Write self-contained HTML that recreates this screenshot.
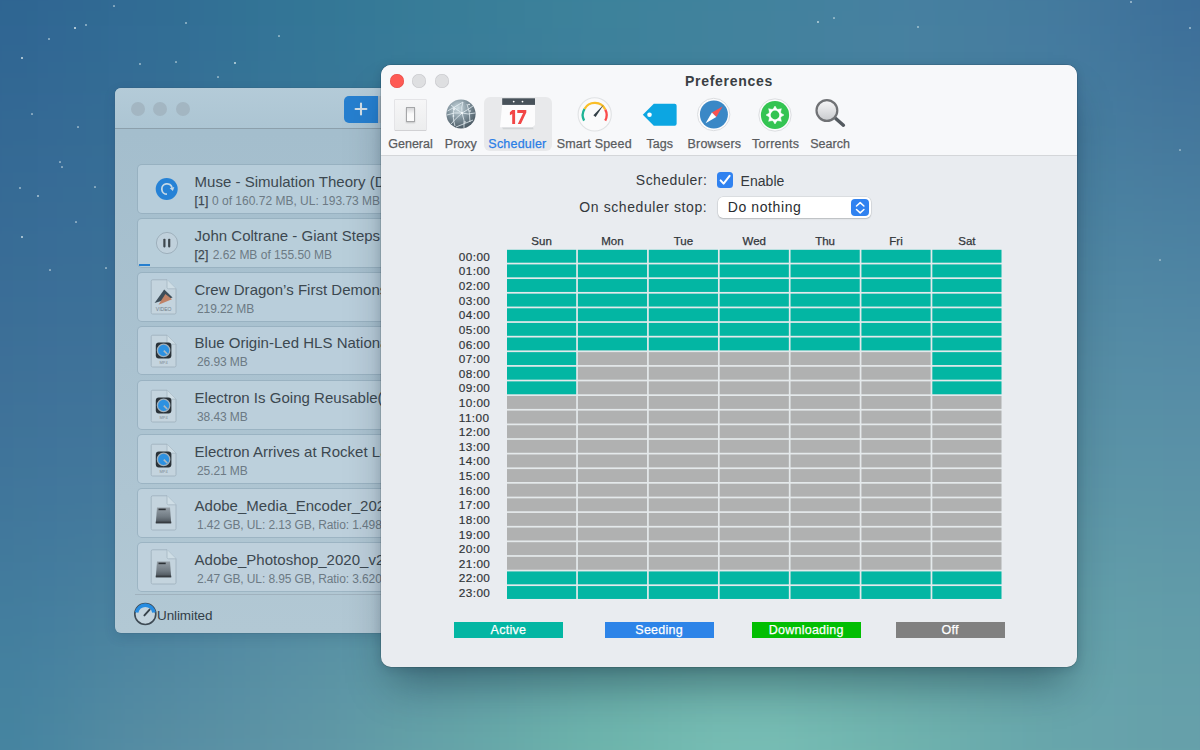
<!DOCTYPE html><html><head><meta charset="utf-8"><style>
html,body{margin:0;padding:0;}
body{width:1200px;height:750px;overflow:hidden;position:relative;font-family:"Liberation Sans",sans-serif;
background:rgb(70,128,158);
}
.t{position:absolute;white-space:nowrap;line-height:1;font-family:"Liberation Sans",sans-serif;}
.abs{position:absolute;}
</style></head><body>

<div class="abs" style="left:-250px;top:-250px;width:1700px;height:1250px;filter:blur(55px);overflow:hidden">
<div class="abs" style="left:0px;top:0px;width:325.0px;height:312.5px;background:rgb(46, 100, 146)"></div>
<div class="abs" style="left:325.0px;top:0px;width:150.0px;height:312.5px;background:rgb(48, 108, 148)"></div>
<div class="abs" style="left:475.0px;top:0px;width:150.0px;height:312.5px;background:rgb(50, 118, 150)"></div>
<div class="abs" style="left:625.0px;top:0px;width:150.0px;height:312.5px;background:rgb(55, 125, 152)"></div>
<div class="abs" style="left:775.0px;top:0px;width:150.0px;height:312.5px;background:rgb(60, 130, 155)"></div>
<div class="abs" style="left:925.0px;top:0px;width:150.0px;height:312.5px;background:rgb(65, 130, 157)"></div>
<div class="abs" style="left:1075.0px;top:0px;width:150.0px;height:312.5px;background:rgb(70, 128, 160)"></div>
<div class="abs" style="left:1225.0px;top:0px;width:150.0px;height:312.5px;background:rgb(68, 122, 158)"></div>
<div class="abs" style="left:1375.0px;top:0px;width:325.0px;height:312.5px;background:rgb(58, 108, 152)"></div>
<div class="abs" style="left:0px;top:312.5px;width:325.0px;height:125.0px;background:rgb(52, 104, 148)"></div>
<div class="abs" style="left:325.0px;top:312.5px;width:150.0px;height:125.0px;background:rgb(54, 110, 150)"></div>
<div class="abs" style="left:475.0px;top:312.5px;width:150.0px;height:125.0px;background:rgb(56, 118, 152)"></div>
<div class="abs" style="left:625.0px;top:312.5px;width:150.0px;height:125.0px;background:rgb(60, 124, 154)"></div>
<div class="abs" style="left:775.0px;top:312.5px;width:150.0px;height:125.0px;background:rgb(64, 128, 156)"></div>
<div class="abs" style="left:925.0px;top:312.5px;width:150.0px;height:125.0px;background:rgb(68, 130, 158)"></div>
<div class="abs" style="left:1075.0px;top:312.5px;width:150.0px;height:125.0px;background:rgb(72, 130, 160)"></div>
<div class="abs" style="left:1225.0px;top:312.5px;width:150.0px;height:125.0px;background:rgb(70, 126, 160)"></div>
<div class="abs" style="left:1375.0px;top:312.5px;width:325.0px;height:125.0px;background:rgb(68, 118, 155)"></div>
<div class="abs" style="left:0px;top:437.5px;width:325.0px;height:125.0px;background:rgb(56, 108, 150)"></div>
<div class="abs" style="left:325.0px;top:437.5px;width:150.0px;height:125.0px;background:rgb(58, 112, 152)"></div>
<div class="abs" style="left:475.0px;top:437.5px;width:150.0px;height:125.0px;background:rgb(60, 118, 154)"></div>
<div class="abs" style="left:625.0px;top:437.5px;width:150.0px;height:125.0px;background:rgb(64, 124, 156)"></div>
<div class="abs" style="left:775.0px;top:437.5px;width:150.0px;height:125.0px;background:rgb(68, 128, 158)"></div>
<div class="abs" style="left:925.0px;top:437.5px;width:150.0px;height:125.0px;background:rgb(72, 132, 160)"></div>
<div class="abs" style="left:1075.0px;top:437.5px;width:150.0px;height:125.0px;background:rgb(76, 134, 162)"></div>
<div class="abs" style="left:1225.0px;top:437.5px;width:150.0px;height:125.0px;background:rgb(78, 134, 162)"></div>
<div class="abs" style="left:1375.0px;top:437.5px;width:325.0px;height:125.0px;background:rgb(76, 130, 162)"></div>
<div class="abs" style="left:0px;top:562.5px;width:325.0px;height:125.0px;background:rgb(62, 112, 152)"></div>
<div class="abs" style="left:325.0px;top:562.5px;width:150.0px;height:125.0px;background:rgb(64, 116, 154)"></div>
<div class="abs" style="left:475.0px;top:562.5px;width:150.0px;height:125.0px;background:rgb(66, 120, 156)"></div>
<div class="abs" style="left:625.0px;top:562.5px;width:150.0px;height:125.0px;background:rgb(70, 126, 158)"></div>
<div class="abs" style="left:775.0px;top:562.5px;width:150.0px;height:125.0px;background:rgb(76, 132, 160)"></div>
<div class="abs" style="left:925.0px;top:562.5px;width:150.0px;height:125.0px;background:rgb(80, 138, 162)"></div>
<div class="abs" style="left:1075.0px;top:562.5px;width:150.0px;height:125.0px;background:rgb(84, 140, 164)"></div>
<div class="abs" style="left:1225.0px;top:562.5px;width:150.0px;height:125.0px;background:rgb(86, 142, 165)"></div>
<div class="abs" style="left:1375.0px;top:562.5px;width:325.0px;height:125.0px;background:rgb(86, 140, 166)"></div>
<div class="abs" style="left:0px;top:687.5px;width:325.0px;height:125.0px;background:rgb(64, 118, 155)"></div>
<div class="abs" style="left:325.0px;top:687.5px;width:150.0px;height:125.0px;background:rgb(68, 122, 157)"></div>
<div class="abs" style="left:475.0px;top:687.5px;width:150.0px;height:125.0px;background:rgb(72, 128, 158)"></div>
<div class="abs" style="left:625.0px;top:687.5px;width:150.0px;height:125.0px;background:rgb(78, 136, 160)"></div>
<div class="abs" style="left:775.0px;top:687.5px;width:150.0px;height:125.0px;background:rgb(84, 146, 162)"></div>
<div class="abs" style="left:925.0px;top:687.5px;width:150.0px;height:125.0px;background:rgb(90, 152, 164)"></div>
<div class="abs" style="left:1075.0px;top:687.5px;width:150.0px;height:125.0px;background:rgb(92, 152, 165)"></div>
<div class="abs" style="left:1225.0px;top:687.5px;width:150.0px;height:125.0px;background:rgb(92, 150, 167)"></div>
<div class="abs" style="left:1375.0px;top:687.5px;width:325.0px;height:125.0px;background:rgb(92, 148, 167)"></div>
<div class="abs" style="left:0px;top:812.5px;width:325.0px;height:125.0px;background:rgb(66, 125, 158)"></div>
<div class="abs" style="left:325.0px;top:812.5px;width:150.0px;height:125.0px;background:rgb(76, 132, 160)"></div>
<div class="abs" style="left:475.0px;top:812.5px;width:150.0px;height:125.0px;background:rgb(86, 142, 163)"></div>
<div class="abs" style="left:625.0px;top:812.5px;width:150.0px;height:125.0px;background:rgb(92, 152, 165)"></div>
<div class="abs" style="left:775.0px;top:812.5px;width:150.0px;height:125.0px;background:rgb(100, 166, 168)"></div>
<div class="abs" style="left:925.0px;top:812.5px;width:150.0px;height:125.0px;background:rgb(106, 175, 170)"></div>
<div class="abs" style="left:1075.0px;top:812.5px;width:150.0px;height:125.0px;background:rgb(104, 170, 170)"></div>
<div class="abs" style="left:1225.0px;top:812.5px;width:150.0px;height:125.0px;background:rgb(100, 162, 170)"></div>
<div class="abs" style="left:1375.0px;top:812.5px;width:325.0px;height:125.0px;background:rgb(98, 156, 169)"></div>
<div class="abs" style="left:0px;top:937.5px;width:325.0px;height:312.5px;background:rgb(68, 132, 160)"></div>
<div class="abs" style="left:325.0px;top:937.5px;width:150.0px;height:312.5px;background:rgb(88, 142, 163)"></div>
<div class="abs" style="left:475.0px;top:937.5px;width:150.0px;height:312.5px;background:rgb(95, 150, 166)"></div>
<div class="abs" style="left:625.0px;top:937.5px;width:150.0px;height:312.5px;background:rgb(102, 165, 168)"></div>
<div class="abs" style="left:775.0px;top:937.5px;width:150.0px;height:312.5px;background:rgb(110, 182, 172)"></div>
<div class="abs" style="left:925.0px;top:937.5px;width:150.0px;height:312.5px;background:rgb(122, 192, 182)"></div>
<div class="abs" style="left:1075.0px;top:937.5px;width:150.0px;height:312.5px;background:rgb(112, 180, 174)"></div>
<div class="abs" style="left:1225.0px;top:937.5px;width:150.0px;height:312.5px;background:rgb(104, 166, 171)"></div>
<div class="abs" style="left:1375.0px;top:937.5px;width:325.0px;height:312.5px;background:rgb(103, 160, 170)"></div>
</div>
<div class="abs" style="left:73.9px;top:26.9px;width:2.2px;height:2.2px;border-radius:50%;background:rgba(235,245,245,0.9)"></div>
<div class="abs" style="left:21.0px;top:57.0px;width:2px;height:2px;border-radius:50%;background:rgba(235,245,245,0.85)"></div>
<div class="abs" style="left:234.0px;top:62.0px;width:2px;height:2px;border-radius:50%;background:rgba(235,245,245,0.8)"></div>
<div class="abs" style="left:21.0px;top:236.0px;width:2px;height:2px;border-radius:50%;background:rgba(235,245,245,0.8)"></div>
<div class="abs" style="left:37.25px;top:195.25px;width:1.5px;height:1.5px;border-radius:50%;background:rgba(235,245,245,0.6)"></div>
<div class="abs" style="left:19.35px;top:187.35px;width:1.3px;height:1.3px;border-radius:50%;background:rgba(235,245,245,0.5)"></div>
<div class="abs" style="left:48.35px;top:38.35px;width:1.3px;height:1.3px;border-radius:50%;background:rgba(235,245,245,0.5)"></div>
<div class="abs" style="left:85.35px;top:24.35px;width:1.3px;height:1.3px;border-radius:50%;background:rgba(235,245,245,0.5)"></div>
<div class="abs" style="left:139.35px;top:63.35px;width:1.3px;height:1.3px;border-radius:50%;background:rgba(235,245,245,0.5)"></div>
<div class="abs" style="left:175.4px;top:61.4px;width:1.2px;height:1.2px;border-radius:50%;background:rgba(235,245,245,0.45)"></div>
<div class="abs" style="left:185.35px;top:22.35px;width:1.3px;height:1.3px;border-radius:50%;background:rgba(235,245,245,0.5)"></div>
<div class="abs" style="left:113.4px;top:5.4px;width:1.2px;height:1.2px;border-radius:50%;background:rgba(235,245,245,0.45)"></div>
<div class="abs" style="left:31.4px;top:113.4px;width:1.2px;height:1.2px;border-radius:50%;background:rgba(235,245,245,0.45)"></div>
<div class="abs" style="left:77.4px;top:126.4px;width:1.2px;height:1.2px;border-radius:50%;background:rgba(235,245,245,0.45)"></div>
<div class="abs" style="left:59.4px;top:161.4px;width:1.2px;height:1.2px;border-radius:50%;background:rgba(235,245,245,0.45)"></div>
<div class="abs" style="left:61.4px;top:166.4px;width:1.2px;height:1.2px;border-radius:50%;background:rgba(235,245,245,0.45)"></div>
<div class="abs" style="left:94.4px;top:186.4px;width:1.2px;height:1.2px;border-radius:50%;background:rgba(235,245,245,0.45)"></div>
<div class="abs" style="left:75.4px;top:221.4px;width:1.2px;height:1.2px;border-radius:50%;background:rgba(235,245,245,0.45)"></div>
<div class="abs" style="left:49.4px;top:269.4px;width:1.2px;height:1.2px;border-radius:50%;background:rgba(235,245,245,0.45)"></div>
<div class="abs" style="left:105.4px;top:267.4px;width:1.2px;height:1.2px;border-radius:50%;background:rgba(235,245,245,0.45)"></div>
<div class="abs" style="left:115.25px;top:177.25px;width:1.5px;height:1.5px;border-radius:50%;background:rgba(235,245,245,0.6)"></div>
<div class="abs" style="left:217.4px;top:76.4px;width:1.2px;height:1.2px;border-radius:50%;background:rgba(235,245,245,0.45)"></div>
<div class="abs" style="left:278.4px;top:35.4px;width:1.2px;height:1.2px;border-radius:50%;background:rgba(235,245,245,0.45)"></div>
<div class="abs" style="left:817.1px;top:21.1px;width:1.8px;height:1.8px;border-radius:50%;background:rgba(235,245,245,0.7)"></div>
<div class="abs" style="left:833.4px;top:17.4px;width:1.2px;height:1.2px;border-radius:50%;background:rgba(235,245,245,0.45)"></div>
<div class="abs" style="left:917.35px;top:26.35px;width:1.3px;height:1.3px;border-radius:50%;background:rgba(235,245,245,0.5)"></div>
<div class="abs" style="left:1130.25px;top:1.25px;width:1.5px;height:1.5px;border-radius:50%;background:rgba(235,245,245,0.55)"></div>
<div class="abs" style="left:1189.25px;top:27.25px;width:1.5px;height:1.5px;border-radius:50%;background:rgba(235,245,245,0.55)"></div>
<div class="abs" style="left:1179.4px;top:149.4px;width:1.2px;height:1.2px;border-radius:50%;background:rgba(235,245,245,0.4)"></div>
<div class="abs" style="left:1159.4px;top:259.4px;width:1.2px;height:1.2px;border-radius:50%;background:rgba(235,245,245,0.4)"></div>
<div class="abs" style="left:115px;top:88px;width:275px;height:545px;border-radius:6px;background:linear-gradient(rgb(164,190,205) 8%,rgb(170,194,208) 50%,rgb(178,200,212));box-shadow:0 0 0 0.5px rgba(60,90,110,0.35),0 4px 12px rgba(20,50,80,0.15);overflow:hidden">
<div class="abs" style="left:0;top:0;width:275px;height:40.3px;background:linear-gradient(rgb(180,203,216),rgb(172,197,211));border-bottom:1.9px solid rgb(140,160,172)"></div>
<div class="abs" style="left:15.50px;top:14.20px;width:14px;height:14px;border-radius:7px;background:rgb(163,182,194)"></div>
<div class="abs" style="left:38.20px;top:14.20px;width:14px;height:14px;border-radius:7px;background:rgb(163,182,194)"></div>
<div class="abs" style="left:60.80px;top:14.20px;width:14px;height:14px;border-radius:7px;background:rgb(163,182,194)"></div>
<div class="abs" style="left:229px;top:8px;width:40px;height:27px;border-radius:5px 0 0 5px;background:rgb(38,127,207)"></div>
<svg class="abs" style="left:238.70px;top:14.30px" width="14" height="14" viewBox="0 0 14 14"><path d="M1.6 7 H12.4 M7 1.6 V12.4" stroke="rgb(210,222,230)" stroke-width="2.1" stroke-linecap="round"/></svg>
<div class="abs" style="left:263px;top:8px;width:4px;height:27px;background:rgb(168,184,195)"></div>
</div>
<div class="abs" style="left:137.5px;top:165.30px;width:262px;height:47.5px;border-radius:4px;background:rgb(183,205,218);box-shadow:0 0 0 1px rgba(140,165,182,0.55)"></div>
<svg class="abs" style="left:155px;top:177.10px" width="24" height="24" viewBox="0 0 24 24"><circle cx="11.7" cy="12" r="11" fill="rgb(38,130,214)"/><path d="M12 17.2 A5.2 5.2 0 1 1 17.02 10.65" fill="none" stroke="rgb(196,216,230)" stroke-width="1.8"/><path d="M19.3 10.0 L14.7 11.3 L17.9 14.0 Z" fill="rgb(196,216,230)"/></svg>
<div class="t" style="left:194.50px;top:173.70px;font-size:15px;color:rgb(60,72,80);font-weight:400;letter-spacing:0.02px;">Muse - Simulation Theory (Deluxe)</div>
<div class="t" style="left:194.50px;top:194.64px;font-size:12px;color:rgb(62,72,80);font-weight:400;letter-spacing:0.2px;-webkit-text-stroke:0.25px rgb(62,72,80);">[1]</div>
<div class="t" style="left:212.00px;top:194.64px;font-size:12px;color:rgb(108,122,132);font-weight:400;letter-spacing:0px;">0 of 160.72 MB, UL: 193.73 MB</div>
<div class="abs" style="left:137.5px;top:219.20px;width:262px;height:47.5px;border-radius:4px;background:rgb(184,206,218);box-shadow:0 0 0 1px rgba(140,165,182,0.55)"></div>
<svg class="abs" style="left:155px;top:231.00px" width="24" height="24" viewBox="0 0 24 24"><circle cx="12" cy="12" r="10.6" fill="rgb(192,209,220)" stroke="rgb(158,176,188)" stroke-width="1"/><rect x="8.3" y="7.8" width="2.2" height="8.6" rx="0.8" fill="rgb(62,72,78)"/><rect x="13.1" y="7.8" width="2.2" height="8.6" rx="0.8" fill="rgb(62,72,78)"/></svg>
<div class="t" style="left:194.50px;top:227.60px;font-size:15px;color:rgb(60,72,80);font-weight:400;letter-spacing:0.02px;">John Coltrane - Giant Steps (60th)</div>
<div class="t" style="left:194.50px;top:248.54px;font-size:12px;color:rgb(62,72,80);font-weight:400;letter-spacing:0.2px;-webkit-text-stroke:0.25px rgb(62,72,80);">[2]</div>
<div class="t" style="left:212.70px;top:248.54px;font-size:12px;color:rgb(108,122,132);font-weight:400;letter-spacing:0px;">2.62 MB of 155.50 MB</div>
<div class="abs" style="left:137.5px;top:273.20px;width:262px;height:47.5px;border-radius:4px;background:rgb(185,206,219);box-shadow:0 0 0 1px rgba(140,165,182,0.55)"></div>
<svg class="abs" style="left:150px;top:278.70px" width="28" height="36" viewBox="0 0 28 36"><path d="M1.2 2.3 Q1.2 0.8 2.7 0.8 L17 0.8 L26 9.8 L26 33.5 Q26 35 24.5 35 L2.7 35 Q1.2 35 1.2 33.5 Z" fill="rgb(196,212,222)" stroke="rgb(160,178,190)" stroke-width="0.9"/><path d="M17 0.8 L17 8.3 Q17 9.8 18.5 9.8 L26 9.8" fill="rgb(206,221,229)" stroke="rgb(165,182,194)" stroke-width="0.8"/><path d="M4.6 23.9 L14.2 10.4 L22.6 18.5 Z" fill="rgb(62,78,90)"/><path d="M8.5 25.7 L15.4 14.9 L22 20.3 Z" fill="rgb(192,130,102)"/><text x="13.6" y="32.2" font-size="5" text-anchor="middle" fill="rgb(115,128,138)" font-family="Liberation Sans">VIDEO</text></svg>
<div class="t" style="left:194.50px;top:281.60px;font-size:15px;color:rgb(60,72,80);font-weight:400;letter-spacing:0.02px;">Crew Dragon’s First Demonstration</div>
<div class="t" style="left:197.00px;top:302.54px;font-size:12px;color:rgb(108,122,132);font-weight:400;letter-spacing:-0.1px;">219.22 MB</div>
<div class="abs" style="left:137.5px;top:326.90px;width:262px;height:47.5px;border-radius:4px;background:rgb(186,206,219);box-shadow:0 0 0 1px rgba(140,165,182,0.55)"></div>
<svg class="abs" style="left:150px;top:332.40px" width="28" height="36" viewBox="0 0 28 36"><path d="M1.2 4.7 Q1.2 3.2 2.7 3.2 L17 3.2 L26 12.2 L26 33.5 Q26 35 24.5 35 L2.7 35 Q1.2 35 1.2 33.5 Z" fill="rgb(196,212,222)" stroke="rgb(160,178,190)" stroke-width="0.9"/><path d="M17 3.2 L17 10.7 Q17 12.2 18.5 12.2 L26 12.2" fill="rgb(206,221,229)" stroke="rgb(165,182,194)" stroke-width="0.8"/><rect x="5.8" y="10.4" width="15.6" height="16.2" rx="3" fill="rgb(42,50,56)"/><circle cx="13.6" cy="18.4" r="6.2" fill="rgb(45,145,225)" stroke="rgb(160,176,188)" stroke-width="1.3"/><path d="M13.8 18.6 L17.2 22" stroke="rgb(175,185,192)" stroke-width="1.7"/><text x="13.6" y="32.3" font-size="4" text-anchor="middle" fill="rgb(125,138,148)" font-family="Liberation Sans">MP4</text></svg>
<div class="t" style="left:194.50px;top:335.30px;font-size:15px;color:rgb(60,72,80);font-weight:400;letter-spacing:0.02px;">Blue Origin-Led HLS National Team</div>
<div class="t" style="left:197.00px;top:356.24px;font-size:12px;color:rgb(108,122,132);font-weight:400;letter-spacing:-0.1px;">26.93 MB</div>
<div class="abs" style="left:137.5px;top:381.20px;width:262px;height:47.5px;border-radius:4px;background:rgb(187,207,219);box-shadow:0 0 0 1px rgba(140,165,182,0.55)"></div>
<svg class="abs" style="left:150px;top:386.70px" width="28" height="36" viewBox="0 0 28 36"><path d="M1.2 4.7 Q1.2 3.2 2.7 3.2 L17 3.2 L26 12.2 L26 33.5 Q26 35 24.5 35 L2.7 35 Q1.2 35 1.2 33.5 Z" fill="rgb(196,212,222)" stroke="rgb(160,178,190)" stroke-width="0.9"/><path d="M17 3.2 L17 10.7 Q17 12.2 18.5 12.2 L26 12.2" fill="rgb(206,221,229)" stroke="rgb(165,182,194)" stroke-width="0.8"/><rect x="5.8" y="10.4" width="15.6" height="16.2" rx="3" fill="rgb(42,50,56)"/><circle cx="13.6" cy="18.4" r="6.2" fill="rgb(45,145,225)" stroke="rgb(160,176,188)" stroke-width="1.3"/><path d="M13.8 18.6 L17.2 22" stroke="rgb(175,185,192)" stroke-width="1.7"/><text x="13.6" y="32.3" font-size="4" text-anchor="middle" fill="rgb(125,138,148)" font-family="Liberation Sans">MP4</text></svg>
<div class="t" style="left:194.50px;top:389.60px;font-size:15px;color:rgb(60,72,80);font-weight:400;letter-spacing:0.02px;">Electron Is Going Reusable(ish)</div>
<div class="t" style="left:197.00px;top:410.54px;font-size:12px;color:rgb(108,122,132);font-weight:400;letter-spacing:-0.1px;">38.43 MB</div>
<div class="abs" style="left:137.5px;top:435.30px;width:262px;height:47.5px;border-radius:4px;background:rgb(188,208,220);box-shadow:0 0 0 1px rgba(140,165,182,0.55)"></div>
<svg class="abs" style="left:150px;top:440.80px" width="28" height="36" viewBox="0 0 28 36"><path d="M1.2 4.7 Q1.2 3.2 2.7 3.2 L17 3.2 L26 12.2 L26 33.5 Q26 35 24.5 35 L2.7 35 Q1.2 35 1.2 33.5 Z" fill="rgb(196,212,222)" stroke="rgb(160,178,190)" stroke-width="0.9"/><path d="M17 3.2 L17 10.7 Q17 12.2 18.5 12.2 L26 12.2" fill="rgb(206,221,229)" stroke="rgb(165,182,194)" stroke-width="0.8"/><rect x="5.8" y="10.4" width="15.6" height="16.2" rx="3" fill="rgb(42,50,56)"/><circle cx="13.6" cy="18.4" r="6.2" fill="rgb(45,145,225)" stroke="rgb(160,176,188)" stroke-width="1.3"/><path d="M13.8 18.6 L17.2 22" stroke="rgb(175,185,192)" stroke-width="1.7"/><text x="13.6" y="32.3" font-size="4" text-anchor="middle" fill="rgb(125,138,148)" font-family="Liberation Sans">MP4</text></svg>
<div class="t" style="left:194.50px;top:443.70px;font-size:15px;color:rgb(60,72,80);font-weight:400;letter-spacing:0.02px;">Electron Arrives at Rocket Lab</div>
<div class="t" style="left:197.00px;top:464.64px;font-size:12px;color:rgb(108,122,132);font-weight:400;letter-spacing:-0.1px;">25.21 MB</div>
<div class="abs" style="left:137.5px;top:489.30px;width:262px;height:47.5px;border-radius:4px;background:rgb(189,208,220);box-shadow:0 0 0 1px rgba(140,165,182,0.55)"></div>
<svg class="abs" style="left:150px;top:494.80px" width="28" height="36" viewBox="0 0 28 36"><path d="M1.2 2.3 Q1.2 0.8 2.7 0.8 L17 0.8 L26 9.8 L26 33.5 Q26 35 24.5 35 L2.7 35 Q1.2 35 1.2 33.5 Z" fill="rgb(196,212,222)" stroke="rgb(160,178,190)" stroke-width="0.9"/><path d="M17 0.8 L17 8.3 Q17 9.8 18.5 9.8 L26 9.8" fill="rgb(206,221,229)" stroke="rgb(165,182,194)" stroke-width="0.8"/><defs><linearGradient id="hd" x1="0" y1="0" x2="0" y2="1"><stop offset="0" stop-color="rgb(150,160,168)"/><stop offset="0.6" stop-color="rgb(112,122,130)"/><stop offset="1" stop-color="rgb(70,78,85)"/></linearGradient></defs><path d="M7 12.4 L20 12.4 L21.2 28.3 L5.8 28.3 Z" fill="url(#hd)"/><rect x="8.5" y="13.6" width="7.2" height="1.6" fill="rgb(45,50,55)"/><rect x="5.8" y="26.6" width="15.4" height="1.7" fill="rgb(55,60,65)"/></svg>
<div class="t" style="left:194.50px;top:497.70px;font-size:15px;color:rgb(60,72,80);font-weight:400;letter-spacing:0.02px;">Adobe_Media_Encoder_2020_v14</div>
<div class="t" style="left:197.00px;top:518.64px;font-size:12px;color:rgb(108,122,132);font-weight:400;letter-spacing:-0.1px;">1.42 GB, UL: 2.13 GB, Ratio: 1.498</div>
<div class="abs" style="left:137.5px;top:543.20px;width:262px;height:47.5px;border-radius:4px;background:rgb(190,208,220);box-shadow:0 0 0 1px rgba(140,165,182,0.55)"></div>
<svg class="abs" style="left:150px;top:548.70px" width="28" height="36" viewBox="0 0 28 36"><path d="M1.2 2.3 Q1.2 0.8 2.7 0.8 L17 0.8 L26 9.8 L26 33.5 Q26 35 24.5 35 L2.7 35 Q1.2 35 1.2 33.5 Z" fill="rgb(196,212,222)" stroke="rgb(160,178,190)" stroke-width="0.9"/><path d="M17 0.8 L17 8.3 Q17 9.8 18.5 9.8 L26 9.8" fill="rgb(206,221,229)" stroke="rgb(165,182,194)" stroke-width="0.8"/><defs><linearGradient id="hd" x1="0" y1="0" x2="0" y2="1"><stop offset="0" stop-color="rgb(150,160,168)"/><stop offset="0.6" stop-color="rgb(112,122,130)"/><stop offset="1" stop-color="rgb(70,78,85)"/></linearGradient></defs><path d="M7 12.4 L20 12.4 L21.2 28.3 L5.8 28.3 Z" fill="url(#hd)"/><rect x="8.5" y="13.6" width="7.2" height="1.6" fill="rgb(45,50,55)"/><rect x="5.8" y="26.6" width="15.4" height="1.7" fill="rgb(55,60,65)"/></svg>
<div class="t" style="left:194.50px;top:551.60px;font-size:15px;color:rgb(60,72,80);font-weight:400;letter-spacing:0.02px;">Adobe_Photoshop_2020_v21</div>
<div class="t" style="left:197.00px;top:572.54px;font-size:12px;color:rgb(108,122,132);font-weight:400;letter-spacing:-0.1px;">2.47 GB, UL: 8.95 GB, Ratio: 3.620</div>
<div class="abs" style="left:138.7px;top:264px;width:11.5px;height:2px;background:rgb(38,127,207)"></div>
<div class="abs" style="left:135px;top:594px;width:260px;height:1px;background:rgb(160,178,190)"></div>
<svg class="abs" style="left:133px;top:602px" width="25" height="25" viewBox="0 0 25 25"><circle cx="12.3" cy="12" r="10.5" fill="rgb(196,212,222)" stroke="rgb(62,74,84)" stroke-width="1.6"/><path d="M3.6 10.6 A8.8 8.8 0 0 1 21 10.6" fill="none" stroke="rgb(38,140,225)" stroke-width="3.6"/><path d="M11.4 13.4 L16.6 7.6" stroke="rgb(55,66,75)" stroke-width="1.9" stroke-linecap="round"/></svg>
<div class="t" style="left:157.00px;top:608.87px;font-size:13.5px;color:rgb(50,62,72);font-weight:400;letter-spacing:-0.1px;">Unlimited</div>
<div class="abs" style="left:381px;top:65.2px;width:696.3px;height:601.6px;border-radius:10px;background:rgb(233,236,240);overflow:hidden;box-shadow:0 0 0 0.5px rgba(0,0,0,0.2),0 26px 40px -10px rgba(0,20,40,0.38),0 2px 10px rgba(0,20,40,0.14)">
<div class="abs" style="left:0;top:0;width:696.3px;height:89.8px;background:rgb(247,248,250);border-bottom:1px solid rgb(212,214,217)"></div>
</div>
<div class="abs" style="left:389.7px;top:73.8px;width:14px;height:14px;border-radius:7px;background:rgb(254,90,84);box-shadow:inset 0 0 0 0.5px rgba(210,60,55,0.6)"></div>
<div class="abs" style="left:412.2px;top:73.8px;width:14px;height:14px;border-radius:7px;background:rgb(222,223,225);box-shadow:inset 0 0 0 0.5px rgba(180,180,185,0.6)"></div>
<div class="abs" style="left:434.7px;top:73.8px;width:14px;height:14px;border-radius:7px;background:rgb(222,223,225);box-shadow:inset 0 0 0 0.5px rgba(180,180,185,0.6)"></div>
<div class="t" style="left:529.00px;width:400px;text-align:center;top:73.55px;font-size:14px;color:rgb(58,63,68);font-weight:700;letter-spacing:0.7px;">Preferences</div>
<div class="abs" style="left:483.5px;top:96.8px;width:68px;height:54px;border-radius:6px;background:rgb(232,233,235)"></div>
<div class="abs" style="left:395.4px;top:99.7px;width:31px;height:30.5px;background:linear-gradient(rgb(246,246,247),rgb(236,237,238));box-shadow:0 0 0 0.6px rgb(215,216,218), 0 1px 0 rgb(200,201,203)"></div>
<div class="abs" style="left:406.2px;top:106.6px;width:9px;height:15.4px;box-sizing:border-box;border:1.2px solid rgb(165,166,168);background:linear-gradient(rgb(215,215,217),rgb(250,250,250) 45%,rgb(252,252,252));box-shadow:0 1px 1.5px rgba(0,0,0,0.18)"></div>
<svg class="abs" style="left:445px;top:98.2px" width="32" height="32" viewBox="0 0 32 32">
<defs><radialGradient id="gl" cx="0.4" cy="0.3" r="0.8"><stop offset="0" stop-color="rgb(205,220,226)"/><stop offset="0.45" stop-color="rgb(130,148,158)"/><stop offset="1" stop-color="rgb(60,74,84)"/></radialGradient></defs>
<circle cx="16" cy="16" r="14.6" fill="url(#gl)"/>
<g fill="none" stroke="rgba(240,248,252,0.8)" stroke-width="0.9">
<path d="M2.5 13 Q10 9 18 4"/><path d="M6 7 Q12 12 17 15 Q24 11 28 8"/><path d="M2 17 Q9 14 17 15"/><path d="M17 15 Q23 17 30 15"/><path d="M6 26 Q11 20 17 15"/><path d="M17 15 Q20 22 19 30"/><path d="M18 4 Q16 9 17 15"/><path d="M11 29 Q21 25 28 22"/><path d="M9 11 Q7 18 10 28"/><path d="M22 6 Q25 14 25 24"/>
</g>
<g fill="rgb(245,250,252)"><circle cx="17" cy="15" r="1.1"/><circle cx="9" cy="11" r="0.9"/><circle cx="25" cy="13" r="0.8"/><circle cx="8.5" cy="18" r="0.8"/><circle cx="20" cy="24" r="0.8"/><circle cx="24" cy="6.5" r="0.8"/></g>
</svg>
<svg class="abs" style="left:499px;top:97px" width="39" height="34" viewBox="0 0 39 34">
<path d="M3 30.3 L34 30.3 L34.5 32.3 L4 32.3 Z" fill="rgb(200,202,205)" opacity="0.7"/>
<path d="M3.2 7.5 L36 7.5 L36 28 L33.3 30.3 L1 30.3 Z" fill="rgb(252,252,253)"/>
<rect x="3.2" y="1.3" width="32.8" height="6.6" fill="rgb(72,82,90)"/>
<circle cx="14.7" cy="4.6" r="0.9" fill="#fff"/><circle cx="23.5" cy="4.6" r="0.9" fill="#fff"/>
<path d="M13.3 13.1 L16.1 13.1 L16.1 27.1 L13.2 27.1 L13.2 16.9 L10.9 18.3 L10.9 15.3 Z" fill="rgb(242,70,70)"/><path d="M18.3 13.1 L27.3 13.1 L27.3 15.5 L21.9 27.1 L18.8 27.1 L24.1 15.9 L18.3 15.9 Z" fill="rgb(242,70,70)"/>
</svg>
<svg class="abs" style="left:576px;top:96px" width="38" height="38" viewBox="0 0 38 38">
<circle cx="18.7" cy="18.4" r="16.6" fill="rgb(250,250,251)" stroke="rgb(224,226,228)" stroke-width="1.1"/>
<g fill="none" stroke-width="2.3">
<path d="M8.1 24.6 A11.6 11.6 0 0 1 8.6 12.9" stroke="rgb(30,180,150)"/>
<path d="M8.6 12.9 A11.6 11.6 0 0 1 29.3 13.6" stroke="rgb(250,190,40)"/>
<path d="M29.3 13.6 A11.6 11.6 0 0 1 29.2 24.6" stroke="rgb(250,75,75)"/>
</g>
<path d="M17.4 19.2 L27.8 8.4 L19.6 21 Z" fill="rgb(50,62,70)"/>
</svg>
<svg class="abs" style="left:640px;top:100px" width="40" height="30" viewBox="0 0 40 30">
<path d="M2.8 14.7 L13.8 3.7 L34.6 3.7 Q36.6 3.7 36.6 5.7 L36.6 23.8 Q36.6 25.8 34.6 25.8 L13.8 25.8 Z" fill="rgb(12,166,226)"/>
<circle cx="9.5" cy="14.7" r="2.3" fill="#fff"/>
</svg>
<svg class="abs" style="left:696px;top:96px" width="36" height="36" viewBox="0 0 36 36">
<circle cx="17.7" cy="18.5" r="16.2" fill="rgb(252,252,253)" stroke="rgb(220,222,225)" stroke-width="1"/>
<circle cx="17.9" cy="18.5" r="14.0" fill="rgb(58,136,198)"/>
<path d="M26.6 10.4 L20.3 21.0 L15.9 16.6 Z" fill="rgb(250,82,80)"/>
<path d="M9.6 27.2 L15.9 16.6 L20.3 21.0 Z" fill="#fff"/>
</svg>
<svg class="abs" style="left:757.2px;top:96.6px" width="36" height="36" viewBox="0 0 36 36">
<circle cx="18" cy="18" r="16.2" fill="rgb(252,252,253)" stroke="rgb(220,222,225)" stroke-width="1"/>
<circle cx="18" cy="18" r="14.1" fill="rgb(52,196,82)"/>
<polygon points="18.00,9.00 19.35,11.23 20.37,12.27 21.83,12.26 24.36,11.64 23.74,14.17 23.73,15.63 24.77,16.65 27.00,18.00 24.77,19.35 23.73,20.37 23.74,21.83 24.36,24.36 21.83,23.74 20.37,23.73 19.35,24.77 18.00,27.00 16.65,24.77 15.63,23.73 14.17,23.74 11.64,24.36 12.26,21.83 12.27,20.37 11.23,19.35 9.00,18.00 11.23,16.65 12.27,15.63 12.26,14.17 11.64,11.64 14.17,12.26 15.63,12.27 16.65,11.23" fill="#fff" stroke="#fff" stroke-width="0.5" stroke-linejoin="miter"/>
<circle cx="18" cy="18" r="4.4" fill="rgb(52,196,82)"/>
</svg>
<svg class="abs" style="left:810px;top:94px" width="40" height="40" viewBox="0 0 40 40">
<defs><linearGradient id="lens" x1="0" y1="0" x2="0" y2="1"><stop offset="0" stop-color="rgb(248,248,249)"/><stop offset="1" stop-color="rgb(200,202,205)"/></linearGradient></defs>
<path d="M25.7 24.5 L33.4 31.2" stroke="rgb(84,90,96)" stroke-width="3.5" stroke-linecap="round"/>
<circle cx="16.9" cy="16.5" r="10.4" fill="url(#lens)" stroke="rgb(112,114,117)" stroke-width="2.2"/>
</svg>
<div class="t" style="left:210.50px;width:400px;text-align:center;top:138.22px;font-size:12.5px;color:rgb(90,92,95);font-weight:400;letter-spacing:0px;-webkit-text-stroke:0.25px rgb(90,92,95);">General</div>
<div class="t" style="left:260.80px;width:400px;text-align:center;top:138.22px;font-size:12.5px;color:rgb(90,92,95);font-weight:400;letter-spacing:0px;-webkit-text-stroke:0.25px rgb(90,92,95);">Proxy</div>
<div class="t" style="left:317.40px;width:400px;text-align:center;top:138.22px;font-size:12.5px;color:rgb(42,125,230);font-weight:400;letter-spacing:0.2px;-webkit-text-stroke:0.25px rgb(42,125,230);">Scheduler</div>
<div class="t" style="left:394.25px;width:400px;text-align:center;top:138.22px;font-size:12.5px;color:rgb(90,92,95);font-weight:400;letter-spacing:0.2px;-webkit-text-stroke:0.25px rgb(90,92,95);">Smart Speed</div>
<div class="t" style="left:459.70px;width:400px;text-align:center;top:138.22px;font-size:12.5px;color:rgb(90,92,95);font-weight:400;letter-spacing:0px;-webkit-text-stroke:0.25px rgb(90,92,95);">Tags</div>
<div class="t" style="left:514.40px;width:400px;text-align:center;top:138.22px;font-size:12.5px;color:rgb(90,92,95);font-weight:400;letter-spacing:0.2px;-webkit-text-stroke:0.25px rgb(90,92,95);">Browsers</div>
<div class="t" style="left:575.60px;width:400px;text-align:center;top:138.22px;font-size:12.5px;color:rgb(90,92,95);font-weight:400;letter-spacing:0.25px;-webkit-text-stroke:0.25px rgb(90,92,95);">Torrents</div>
<div class="t" style="left:630.10px;width:400px;text-align:center;top:138.22px;font-size:12.5px;color:rgb(90,92,95);font-weight:400;letter-spacing:0px;-webkit-text-stroke:0.25px rgb(90,92,95);">Search</div>
<div class="t" style="left:307.30px;width:400px;text-align:right;top:172.55px;font-size:14px;color:rgb(52,56,60);font-weight:400;letter-spacing:0.45px;">Scheduler:</div>
<div class="t" style="left:307.30px;width:400px;text-align:right;top:200.45px;font-size:14px;color:rgb(52,56,60);font-weight:400;letter-spacing:0.58px;">On scheduler stop:</div>
<div class="abs" style="left:717.2px;top:172px;width:15.6px;height:15.8px;border-radius:3.5px;background:rgb(48,130,240)"></div>
<svg class="abs" style="left:717.2px;top:172px" width="16" height="16" viewBox="0 0 16 16"><path d="M3.6 8.4 L6.6 11.6 L12.6 3.8" fill="none" stroke="#fff" stroke-width="2" stroke-linecap="round" stroke-linejoin="round"/></svg>
<div class="t" style="left:740.50px;top:174.15px;font-size:14px;color:rgb(52,56,60);font-weight:400;letter-spacing:0.05px;">Enable</div>
<div class="abs" style="left:718.1px;top:197.1px;width:152.7px;height:21.2px;border-radius:5px;background:#fff;box-shadow:0 0 0 0.5px rgba(0,0,0,0.12),0 1px 1.5px rgba(0,0,0,0.15)"></div>
<div class="t" style="left:727.70px;top:199.85px;font-size:14px;color:rgb(40,44,48);font-weight:400;letter-spacing:0.6px;">Do nothing</div>
<div class="abs" style="left:850.6px;top:199px;width:18px;height:17px;border-radius:4px;background:rgb(48,130,240)"></div>
<svg class="abs" style="left:850.6px;top:199px" width="18" height="17" viewBox="0 0 18 17"><path d="M5.5 7.0 L9.2 3.6 L12.9 7.0 M5.5 10.5 L9.2 13.9 L12.9 10.5" fill="none" stroke="#fff" stroke-width="1.5" stroke-linecap="round" stroke-linejoin="round"/></svg>
<div class="t" style="left:341.58px;width:400px;text-align:center;top:236.27px;font-size:11.5px;color:rgb(50,54,58);font-weight:400;letter-spacing:0px;-webkit-text-stroke:0.25px rgb(50,54,58);">Sun</div>
<div class="t" style="left:412.47px;width:400px;text-align:center;top:236.27px;font-size:11.5px;color:rgb(50,54,58);font-weight:400;letter-spacing:0px;-webkit-text-stroke:0.25px rgb(50,54,58);">Mon</div>
<div class="t" style="left:483.36px;width:400px;text-align:center;top:236.27px;font-size:11.5px;color:rgb(50,54,58);font-weight:400;letter-spacing:0px;-webkit-text-stroke:0.25px rgb(50,54,58);">Tue</div>
<div class="t" style="left:554.25px;width:400px;text-align:center;top:236.27px;font-size:11.5px;color:rgb(50,54,58);font-weight:400;letter-spacing:0px;-webkit-text-stroke:0.25px rgb(50,54,58);">Wed</div>
<div class="t" style="left:625.14px;width:400px;text-align:center;top:236.27px;font-size:11.5px;color:rgb(50,54,58);font-weight:400;letter-spacing:0px;-webkit-text-stroke:0.25px rgb(50,54,58);">Thu</div>
<div class="t" style="left:696.03px;width:400px;text-align:center;top:236.27px;font-size:11.5px;color:rgb(50,54,58);font-weight:400;letter-spacing:0px;-webkit-text-stroke:0.25px rgb(50,54,58);">Fri</div>
<div class="t" style="left:766.92px;width:400px;text-align:center;top:236.27px;font-size:11.5px;color:rgb(50,54,58);font-weight:400;letter-spacing:0px;-webkit-text-stroke:0.25px rgb(50,54,58);">Sat</div>
<div class="t" style="left:458.80px;top:251.81px;font-size:11.8px;color:rgb(48,52,56);font-weight:400;letter-spacing:0.4px;-webkit-text-stroke:0.18px rgb(48,52,56);">00:00</div>
<div class="t" style="left:458.80px;top:266.43px;font-size:11.8px;color:rgb(48,52,56);font-weight:400;letter-spacing:0.4px;-webkit-text-stroke:0.18px rgb(48,52,56);">01:00</div>
<div class="t" style="left:458.80px;top:281.05px;font-size:11.8px;color:rgb(48,52,56);font-weight:400;letter-spacing:0.4px;-webkit-text-stroke:0.18px rgb(48,52,56);">02:00</div>
<div class="t" style="left:458.80px;top:295.67px;font-size:11.8px;color:rgb(48,52,56);font-weight:400;letter-spacing:0.4px;-webkit-text-stroke:0.18px rgb(48,52,56);">03:00</div>
<div class="t" style="left:458.80px;top:310.29px;font-size:11.8px;color:rgb(48,52,56);font-weight:400;letter-spacing:0.4px;-webkit-text-stroke:0.18px rgb(48,52,56);">04:00</div>
<div class="t" style="left:458.80px;top:324.91px;font-size:11.8px;color:rgb(48,52,56);font-weight:400;letter-spacing:0.4px;-webkit-text-stroke:0.18px rgb(48,52,56);">05:00</div>
<div class="t" style="left:458.80px;top:339.53px;font-size:11.8px;color:rgb(48,52,56);font-weight:400;letter-spacing:0.4px;-webkit-text-stroke:0.18px rgb(48,52,56);">06:00</div>
<div class="t" style="left:458.80px;top:354.15px;font-size:11.8px;color:rgb(48,52,56);font-weight:400;letter-spacing:0.4px;-webkit-text-stroke:0.18px rgb(48,52,56);">07:00</div>
<div class="t" style="left:458.80px;top:368.77px;font-size:11.8px;color:rgb(48,52,56);font-weight:400;letter-spacing:0.4px;-webkit-text-stroke:0.18px rgb(48,52,56);">08:00</div>
<div class="t" style="left:458.80px;top:383.39px;font-size:11.8px;color:rgb(48,52,56);font-weight:400;letter-spacing:0.4px;-webkit-text-stroke:0.18px rgb(48,52,56);">09:00</div>
<div class="t" style="left:458.80px;top:398.01px;font-size:11.8px;color:rgb(48,52,56);font-weight:400;letter-spacing:0.4px;-webkit-text-stroke:0.18px rgb(48,52,56);">10:00</div>
<div class="t" style="left:458.80px;top:412.63px;font-size:11.8px;color:rgb(48,52,56);font-weight:400;letter-spacing:0.4px;-webkit-text-stroke:0.18px rgb(48,52,56);">11:00</div>
<div class="t" style="left:458.80px;top:427.25px;font-size:11.8px;color:rgb(48,52,56);font-weight:400;letter-spacing:0.4px;-webkit-text-stroke:0.18px rgb(48,52,56);">12:00</div>
<div class="t" style="left:458.80px;top:441.87px;font-size:11.8px;color:rgb(48,52,56);font-weight:400;letter-spacing:0.4px;-webkit-text-stroke:0.18px rgb(48,52,56);">13:00</div>
<div class="t" style="left:458.80px;top:456.49px;font-size:11.8px;color:rgb(48,52,56);font-weight:400;letter-spacing:0.4px;-webkit-text-stroke:0.18px rgb(48,52,56);">14:00</div>
<div class="t" style="left:458.80px;top:471.11px;font-size:11.8px;color:rgb(48,52,56);font-weight:400;letter-spacing:0.4px;-webkit-text-stroke:0.18px rgb(48,52,56);">15:00</div>
<div class="t" style="left:458.80px;top:485.73px;font-size:11.8px;color:rgb(48,52,56);font-weight:400;letter-spacing:0.4px;-webkit-text-stroke:0.18px rgb(48,52,56);">16:00</div>
<div class="t" style="left:458.80px;top:500.35px;font-size:11.8px;color:rgb(48,52,56);font-weight:400;letter-spacing:0.4px;-webkit-text-stroke:0.18px rgb(48,52,56);">17:00</div>
<div class="t" style="left:458.80px;top:514.97px;font-size:11.8px;color:rgb(48,52,56);font-weight:400;letter-spacing:0.4px;-webkit-text-stroke:0.18px rgb(48,52,56);">18:00</div>
<div class="t" style="left:458.80px;top:529.59px;font-size:11.8px;color:rgb(48,52,56);font-weight:400;letter-spacing:0.4px;-webkit-text-stroke:0.18px rgb(48,52,56);">19:00</div>
<div class="t" style="left:458.80px;top:544.21px;font-size:11.8px;color:rgb(48,52,56);font-weight:400;letter-spacing:0.4px;-webkit-text-stroke:0.18px rgb(48,52,56);">20:00</div>
<div class="t" style="left:458.80px;top:558.83px;font-size:11.8px;color:rgb(48,52,56);font-weight:400;letter-spacing:0.4px;-webkit-text-stroke:0.18px rgb(48,52,56);">21:00</div>
<div class="t" style="left:458.80px;top:573.45px;font-size:11.8px;color:rgb(48,52,56);font-weight:400;letter-spacing:0.4px;-webkit-text-stroke:0.18px rgb(48,52,56);">22:00</div>
<div class="t" style="left:458.80px;top:588.07px;font-size:11.8px;color:rgb(48,52,56);font-weight:400;letter-spacing:0.4px;-webkit-text-stroke:0.18px rgb(48,52,56);">23:00</div>
<svg class="abs" style="left:0;top:0" width="1200" height="750" viewBox="0 0 1200 750"><rect x="507.0" y="249.8" width="494.50" height="349.16" fill="rgb(228,233,235)"/><rect x="507.00" y="249.80" width="69.17" height="12.90" fill="rgb(3,182,163)"/><rect x="507.00" y="264.42" width="69.17" height="12.90" fill="rgb(3,182,163)"/><rect x="507.00" y="279.04" width="69.17" height="12.90" fill="rgb(3,182,163)"/><rect x="507.00" y="293.66" width="69.17" height="12.90" fill="rgb(3,182,163)"/><rect x="507.00" y="308.28" width="69.17" height="12.90" fill="rgb(3,182,163)"/><rect x="507.00" y="322.90" width="69.17" height="12.90" fill="rgb(3,182,163)"/><rect x="507.00" y="337.52" width="69.17" height="12.90" fill="rgb(3,182,163)"/><rect x="507.00" y="352.14" width="69.17" height="12.90" fill="rgb(3,182,163)"/><rect x="507.00" y="366.76" width="69.17" height="12.90" fill="rgb(3,182,163)"/><rect x="507.00" y="381.38" width="69.17" height="12.90" fill="rgb(3,182,163)"/><rect x="507.00" y="396.00" width="69.17" height="12.90" fill="rgb(176,177,177)"/><rect x="507.00" y="410.62" width="69.17" height="12.90" fill="rgb(176,177,177)"/><rect x="507.00" y="425.24" width="69.17" height="12.90" fill="rgb(176,177,177)"/><rect x="507.00" y="439.86" width="69.17" height="12.90" fill="rgb(176,177,177)"/><rect x="507.00" y="454.48" width="69.17" height="12.90" fill="rgb(176,177,177)"/><rect x="507.00" y="469.10" width="69.17" height="12.90" fill="rgb(176,177,177)"/><rect x="507.00" y="483.72" width="69.17" height="12.90" fill="rgb(176,177,177)"/><rect x="507.00" y="498.34" width="69.17" height="12.90" fill="rgb(176,177,177)"/><rect x="507.00" y="512.96" width="69.17" height="12.90" fill="rgb(176,177,177)"/><rect x="507.00" y="527.58" width="69.17" height="12.90" fill="rgb(176,177,177)"/><rect x="507.00" y="542.20" width="69.17" height="12.90" fill="rgb(176,177,177)"/><rect x="507.00" y="556.82" width="69.17" height="12.90" fill="rgb(176,177,177)"/><rect x="507.00" y="571.44" width="69.17" height="12.90" fill="rgb(3,182,163)"/><rect x="507.00" y="586.06" width="69.17" height="12.90" fill="rgb(3,182,163)"/><rect x="577.89" y="249.80" width="69.17" height="12.90" fill="rgb(3,182,163)"/><rect x="577.89" y="264.42" width="69.17" height="12.90" fill="rgb(3,182,163)"/><rect x="577.89" y="279.04" width="69.17" height="12.90" fill="rgb(3,182,163)"/><rect x="577.89" y="293.66" width="69.17" height="12.90" fill="rgb(3,182,163)"/><rect x="577.89" y="308.28" width="69.17" height="12.90" fill="rgb(3,182,163)"/><rect x="577.89" y="322.90" width="69.17" height="12.90" fill="rgb(3,182,163)"/><rect x="577.89" y="337.52" width="69.17" height="12.90" fill="rgb(3,182,163)"/><rect x="577.89" y="352.14" width="69.17" height="12.90" fill="rgb(176,177,177)"/><rect x="577.89" y="366.76" width="69.17" height="12.90" fill="rgb(176,177,177)"/><rect x="577.89" y="381.38" width="69.17" height="12.90" fill="rgb(176,177,177)"/><rect x="577.89" y="396.00" width="69.17" height="12.90" fill="rgb(176,177,177)"/><rect x="577.89" y="410.62" width="69.17" height="12.90" fill="rgb(176,177,177)"/><rect x="577.89" y="425.24" width="69.17" height="12.90" fill="rgb(176,177,177)"/><rect x="577.89" y="439.86" width="69.17" height="12.90" fill="rgb(176,177,177)"/><rect x="577.89" y="454.48" width="69.17" height="12.90" fill="rgb(176,177,177)"/><rect x="577.89" y="469.10" width="69.17" height="12.90" fill="rgb(176,177,177)"/><rect x="577.89" y="483.72" width="69.17" height="12.90" fill="rgb(176,177,177)"/><rect x="577.89" y="498.34" width="69.17" height="12.90" fill="rgb(176,177,177)"/><rect x="577.89" y="512.96" width="69.17" height="12.90" fill="rgb(176,177,177)"/><rect x="577.89" y="527.58" width="69.17" height="12.90" fill="rgb(176,177,177)"/><rect x="577.89" y="542.20" width="69.17" height="12.90" fill="rgb(176,177,177)"/><rect x="577.89" y="556.82" width="69.17" height="12.90" fill="rgb(176,177,177)"/><rect x="577.89" y="571.44" width="69.17" height="12.90" fill="rgb(3,182,163)"/><rect x="577.89" y="586.06" width="69.17" height="12.90" fill="rgb(3,182,163)"/><rect x="648.78" y="249.80" width="69.17" height="12.90" fill="rgb(3,182,163)"/><rect x="648.78" y="264.42" width="69.17" height="12.90" fill="rgb(3,182,163)"/><rect x="648.78" y="279.04" width="69.17" height="12.90" fill="rgb(3,182,163)"/><rect x="648.78" y="293.66" width="69.17" height="12.90" fill="rgb(3,182,163)"/><rect x="648.78" y="308.28" width="69.17" height="12.90" fill="rgb(3,182,163)"/><rect x="648.78" y="322.90" width="69.17" height="12.90" fill="rgb(3,182,163)"/><rect x="648.78" y="337.52" width="69.17" height="12.90" fill="rgb(3,182,163)"/><rect x="648.78" y="352.14" width="69.17" height="12.90" fill="rgb(176,177,177)"/><rect x="648.78" y="366.76" width="69.17" height="12.90" fill="rgb(176,177,177)"/><rect x="648.78" y="381.38" width="69.17" height="12.90" fill="rgb(176,177,177)"/><rect x="648.78" y="396.00" width="69.17" height="12.90" fill="rgb(176,177,177)"/><rect x="648.78" y="410.62" width="69.17" height="12.90" fill="rgb(176,177,177)"/><rect x="648.78" y="425.24" width="69.17" height="12.90" fill="rgb(176,177,177)"/><rect x="648.78" y="439.86" width="69.17" height="12.90" fill="rgb(176,177,177)"/><rect x="648.78" y="454.48" width="69.17" height="12.90" fill="rgb(176,177,177)"/><rect x="648.78" y="469.10" width="69.17" height="12.90" fill="rgb(176,177,177)"/><rect x="648.78" y="483.72" width="69.17" height="12.90" fill="rgb(176,177,177)"/><rect x="648.78" y="498.34" width="69.17" height="12.90" fill="rgb(176,177,177)"/><rect x="648.78" y="512.96" width="69.17" height="12.90" fill="rgb(176,177,177)"/><rect x="648.78" y="527.58" width="69.17" height="12.90" fill="rgb(176,177,177)"/><rect x="648.78" y="542.20" width="69.17" height="12.90" fill="rgb(176,177,177)"/><rect x="648.78" y="556.82" width="69.17" height="12.90" fill="rgb(176,177,177)"/><rect x="648.78" y="571.44" width="69.17" height="12.90" fill="rgb(3,182,163)"/><rect x="648.78" y="586.06" width="69.17" height="12.90" fill="rgb(3,182,163)"/><rect x="719.67" y="249.80" width="69.17" height="12.90" fill="rgb(3,182,163)"/><rect x="719.67" y="264.42" width="69.17" height="12.90" fill="rgb(3,182,163)"/><rect x="719.67" y="279.04" width="69.17" height="12.90" fill="rgb(3,182,163)"/><rect x="719.67" y="293.66" width="69.17" height="12.90" fill="rgb(3,182,163)"/><rect x="719.67" y="308.28" width="69.17" height="12.90" fill="rgb(3,182,163)"/><rect x="719.67" y="322.90" width="69.17" height="12.90" fill="rgb(3,182,163)"/><rect x="719.67" y="337.52" width="69.17" height="12.90" fill="rgb(3,182,163)"/><rect x="719.67" y="352.14" width="69.17" height="12.90" fill="rgb(176,177,177)"/><rect x="719.67" y="366.76" width="69.17" height="12.90" fill="rgb(176,177,177)"/><rect x="719.67" y="381.38" width="69.17" height="12.90" fill="rgb(176,177,177)"/><rect x="719.67" y="396.00" width="69.17" height="12.90" fill="rgb(176,177,177)"/><rect x="719.67" y="410.62" width="69.17" height="12.90" fill="rgb(176,177,177)"/><rect x="719.67" y="425.24" width="69.17" height="12.90" fill="rgb(176,177,177)"/><rect x="719.67" y="439.86" width="69.17" height="12.90" fill="rgb(176,177,177)"/><rect x="719.67" y="454.48" width="69.17" height="12.90" fill="rgb(176,177,177)"/><rect x="719.67" y="469.10" width="69.17" height="12.90" fill="rgb(176,177,177)"/><rect x="719.67" y="483.72" width="69.17" height="12.90" fill="rgb(176,177,177)"/><rect x="719.67" y="498.34" width="69.17" height="12.90" fill="rgb(176,177,177)"/><rect x="719.67" y="512.96" width="69.17" height="12.90" fill="rgb(176,177,177)"/><rect x="719.67" y="527.58" width="69.17" height="12.90" fill="rgb(176,177,177)"/><rect x="719.67" y="542.20" width="69.17" height="12.90" fill="rgb(176,177,177)"/><rect x="719.67" y="556.82" width="69.17" height="12.90" fill="rgb(176,177,177)"/><rect x="719.67" y="571.44" width="69.17" height="12.90" fill="rgb(3,182,163)"/><rect x="719.67" y="586.06" width="69.17" height="12.90" fill="rgb(3,182,163)"/><rect x="790.55" y="249.80" width="69.17" height="12.90" fill="rgb(3,182,163)"/><rect x="790.55" y="264.42" width="69.17" height="12.90" fill="rgb(3,182,163)"/><rect x="790.55" y="279.04" width="69.17" height="12.90" fill="rgb(3,182,163)"/><rect x="790.55" y="293.66" width="69.17" height="12.90" fill="rgb(3,182,163)"/><rect x="790.55" y="308.28" width="69.17" height="12.90" fill="rgb(3,182,163)"/><rect x="790.55" y="322.90" width="69.17" height="12.90" fill="rgb(3,182,163)"/><rect x="790.55" y="337.52" width="69.17" height="12.90" fill="rgb(3,182,163)"/><rect x="790.55" y="352.14" width="69.17" height="12.90" fill="rgb(176,177,177)"/><rect x="790.55" y="366.76" width="69.17" height="12.90" fill="rgb(176,177,177)"/><rect x="790.55" y="381.38" width="69.17" height="12.90" fill="rgb(176,177,177)"/><rect x="790.55" y="396.00" width="69.17" height="12.90" fill="rgb(176,177,177)"/><rect x="790.55" y="410.62" width="69.17" height="12.90" fill="rgb(176,177,177)"/><rect x="790.55" y="425.24" width="69.17" height="12.90" fill="rgb(176,177,177)"/><rect x="790.55" y="439.86" width="69.17" height="12.90" fill="rgb(176,177,177)"/><rect x="790.55" y="454.48" width="69.17" height="12.90" fill="rgb(176,177,177)"/><rect x="790.55" y="469.10" width="69.17" height="12.90" fill="rgb(176,177,177)"/><rect x="790.55" y="483.72" width="69.17" height="12.90" fill="rgb(176,177,177)"/><rect x="790.55" y="498.34" width="69.17" height="12.90" fill="rgb(176,177,177)"/><rect x="790.55" y="512.96" width="69.17" height="12.90" fill="rgb(176,177,177)"/><rect x="790.55" y="527.58" width="69.17" height="12.90" fill="rgb(176,177,177)"/><rect x="790.55" y="542.20" width="69.17" height="12.90" fill="rgb(176,177,177)"/><rect x="790.55" y="556.82" width="69.17" height="12.90" fill="rgb(176,177,177)"/><rect x="790.55" y="571.44" width="69.17" height="12.90" fill="rgb(3,182,163)"/><rect x="790.55" y="586.06" width="69.17" height="12.90" fill="rgb(3,182,163)"/><rect x="861.44" y="249.80" width="69.17" height="12.90" fill="rgb(3,182,163)"/><rect x="861.44" y="264.42" width="69.17" height="12.90" fill="rgb(3,182,163)"/><rect x="861.44" y="279.04" width="69.17" height="12.90" fill="rgb(3,182,163)"/><rect x="861.44" y="293.66" width="69.17" height="12.90" fill="rgb(3,182,163)"/><rect x="861.44" y="308.28" width="69.17" height="12.90" fill="rgb(3,182,163)"/><rect x="861.44" y="322.90" width="69.17" height="12.90" fill="rgb(3,182,163)"/><rect x="861.44" y="337.52" width="69.17" height="12.90" fill="rgb(3,182,163)"/><rect x="861.44" y="352.14" width="69.17" height="12.90" fill="rgb(176,177,177)"/><rect x="861.44" y="366.76" width="69.17" height="12.90" fill="rgb(176,177,177)"/><rect x="861.44" y="381.38" width="69.17" height="12.90" fill="rgb(176,177,177)"/><rect x="861.44" y="396.00" width="69.17" height="12.90" fill="rgb(176,177,177)"/><rect x="861.44" y="410.62" width="69.17" height="12.90" fill="rgb(176,177,177)"/><rect x="861.44" y="425.24" width="69.17" height="12.90" fill="rgb(176,177,177)"/><rect x="861.44" y="439.86" width="69.17" height="12.90" fill="rgb(176,177,177)"/><rect x="861.44" y="454.48" width="69.17" height="12.90" fill="rgb(176,177,177)"/><rect x="861.44" y="469.10" width="69.17" height="12.90" fill="rgb(176,177,177)"/><rect x="861.44" y="483.72" width="69.17" height="12.90" fill="rgb(176,177,177)"/><rect x="861.44" y="498.34" width="69.17" height="12.90" fill="rgb(176,177,177)"/><rect x="861.44" y="512.96" width="69.17" height="12.90" fill="rgb(176,177,177)"/><rect x="861.44" y="527.58" width="69.17" height="12.90" fill="rgb(176,177,177)"/><rect x="861.44" y="542.20" width="69.17" height="12.90" fill="rgb(176,177,177)"/><rect x="861.44" y="556.82" width="69.17" height="12.90" fill="rgb(176,177,177)"/><rect x="861.44" y="571.44" width="69.17" height="12.90" fill="rgb(3,182,163)"/><rect x="861.44" y="586.06" width="69.17" height="12.90" fill="rgb(3,182,163)"/><rect x="932.33" y="249.80" width="69.17" height="12.90" fill="rgb(3,182,163)"/><rect x="932.33" y="264.42" width="69.17" height="12.90" fill="rgb(3,182,163)"/><rect x="932.33" y="279.04" width="69.17" height="12.90" fill="rgb(3,182,163)"/><rect x="932.33" y="293.66" width="69.17" height="12.90" fill="rgb(3,182,163)"/><rect x="932.33" y="308.28" width="69.17" height="12.90" fill="rgb(3,182,163)"/><rect x="932.33" y="322.90" width="69.17" height="12.90" fill="rgb(3,182,163)"/><rect x="932.33" y="337.52" width="69.17" height="12.90" fill="rgb(3,182,163)"/><rect x="932.33" y="352.14" width="69.17" height="12.90" fill="rgb(3,182,163)"/><rect x="932.33" y="366.76" width="69.17" height="12.90" fill="rgb(3,182,163)"/><rect x="932.33" y="381.38" width="69.17" height="12.90" fill="rgb(3,182,163)"/><rect x="932.33" y="396.00" width="69.17" height="12.90" fill="rgb(176,177,177)"/><rect x="932.33" y="410.62" width="69.17" height="12.90" fill="rgb(176,177,177)"/><rect x="932.33" y="425.24" width="69.17" height="12.90" fill="rgb(176,177,177)"/><rect x="932.33" y="439.86" width="69.17" height="12.90" fill="rgb(176,177,177)"/><rect x="932.33" y="454.48" width="69.17" height="12.90" fill="rgb(176,177,177)"/><rect x="932.33" y="469.10" width="69.17" height="12.90" fill="rgb(176,177,177)"/><rect x="932.33" y="483.72" width="69.17" height="12.90" fill="rgb(176,177,177)"/><rect x="932.33" y="498.34" width="69.17" height="12.90" fill="rgb(176,177,177)"/><rect x="932.33" y="512.96" width="69.17" height="12.90" fill="rgb(176,177,177)"/><rect x="932.33" y="527.58" width="69.17" height="12.90" fill="rgb(176,177,177)"/><rect x="932.33" y="542.20" width="69.17" height="12.90" fill="rgb(176,177,177)"/><rect x="932.33" y="556.82" width="69.17" height="12.90" fill="rgb(176,177,177)"/><rect x="932.33" y="571.44" width="69.17" height="12.90" fill="rgb(3,182,163)"/><rect x="932.33" y="586.06" width="69.17" height="12.90" fill="rgb(3,182,163)"/></svg>
<div class="abs" style="left:453.75px;top:621.8px;width:109.25px;height:15.9px;background:rgb(3,182,163)"></div>
<div class="t" style="left:308.38px;width:400px;text-align:center;top:624.12px;font-size:12.5px;color:#fff;font-weight:400;letter-spacing:0.25px;-webkit-text-stroke:0.25px #fff;">Active</div>
<div class="abs" style="left:604.5px;top:621.8px;width:109.25px;height:15.9px;background:rgb(45,132,232)"></div>
<div class="t" style="left:459.12px;width:400px;text-align:center;top:624.12px;font-size:12.5px;color:#fff;font-weight:400;letter-spacing:0.25px;-webkit-text-stroke:0.25px #fff;">Seeding</div>
<div class="abs" style="left:751.75px;top:621.8px;width:109.00px;height:15.9px;background:rgb(2,190,2)"></div>
<div class="t" style="left:606.25px;width:400px;text-align:center;top:624.12px;font-size:12.5px;color:#fff;font-weight:400;letter-spacing:0.25px;-webkit-text-stroke:0.25px #fff;">Downloading</div>
<div class="abs" style="left:895.75px;top:621.8px;width:108.75px;height:15.9px;background:rgb(128,128,128)"></div>
<div class="t" style="left:750.12px;width:400px;text-align:center;top:624.12px;font-size:12.5px;color:#fff;font-weight:400;letter-spacing:0.25px;-webkit-text-stroke:0.25px #fff;">Off</div>
</body></html>
